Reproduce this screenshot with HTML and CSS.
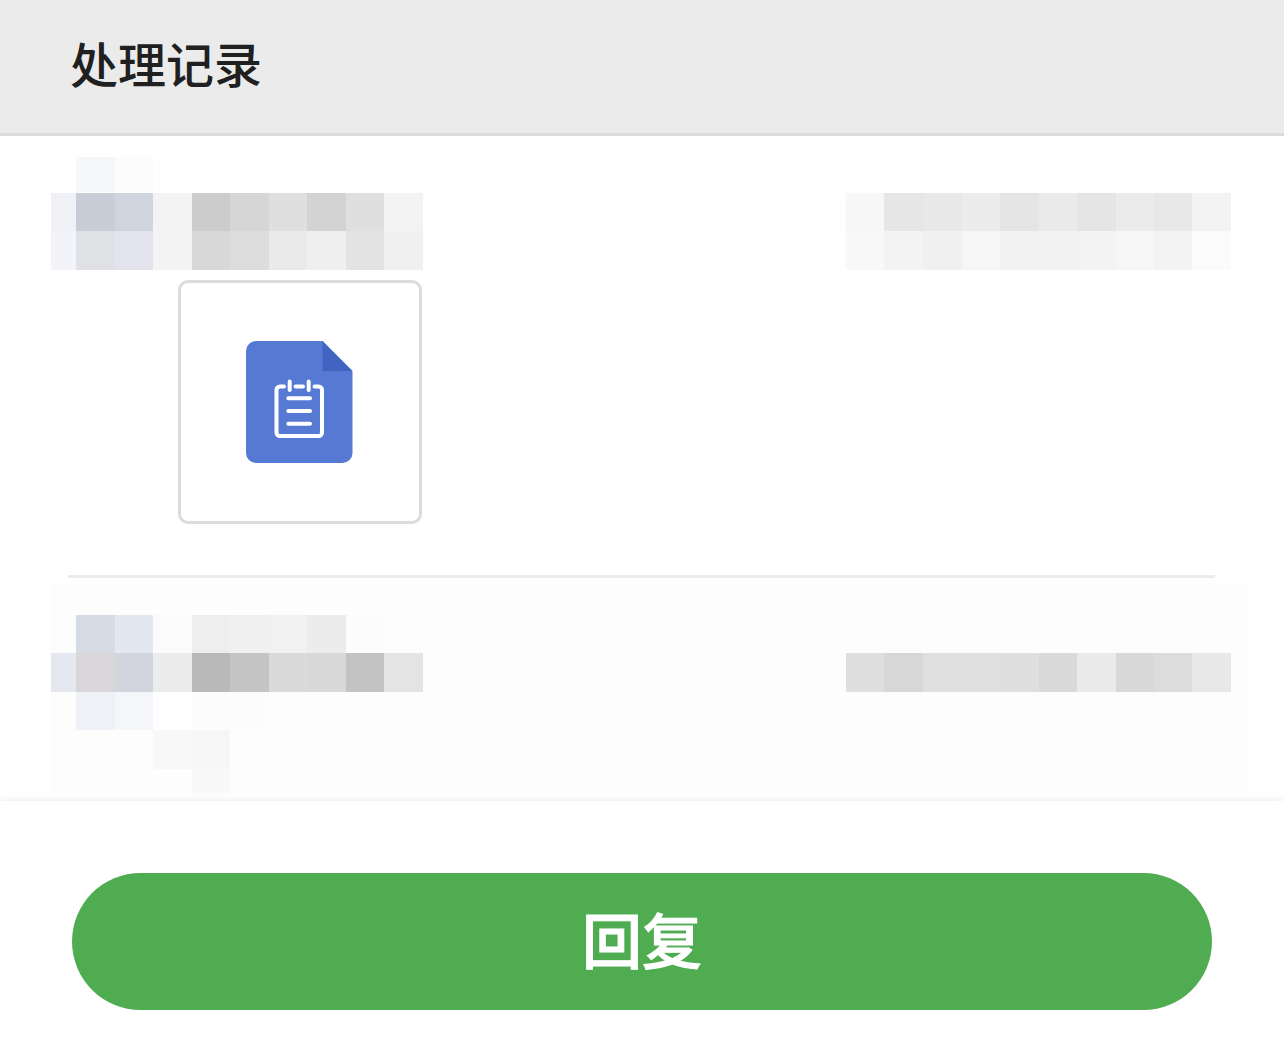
FILE: index.html
```html
<!DOCTYPE html>
<html lang="zh-CN">
<head>
    <meta charset="UTF-8">
    <meta name="viewport" content="width=device-width, initial-scale=1.0">
    <title>处理记录</title>
    <link rel="stylesheet" href="styles.css">
</head>
<body>

<header class="header">
    <h1 class="title">处理记录</h1>
</header>

<main class="records">
    <article class="record">
        <div class="record-head">
            <!-- masked avatar and name -->
            <svg class="mosaic" width="372" height="113" viewBox="0 0 372 113" aria-hidden="true">
                <path fill="#ffffff" d="M0 0h25v35H0z"/>
                <path fill="#f5f7f9" d="M25 0H64v35H25z"/>
                <path fill="#fbfbfb" d="M64 0h38v35H64z"/>
                <path fill="#eff1f6" d="M0 35.5h25V74H0z"/>
                <path fill="#c9cdd8" d="M25 35.5H64V74H25z"/>
                <path fill="#d0d4df" d="M64 35.5h38V74H64z"/>
                <path fill="#f3f3f3" d="M102 35.5h39V74h-39z"/>
                <path fill="#cccccc" d="M140.5 35.5H179V74h-38.5z"/>
                <path fill="#d6d6d6" d="M179 35.5h38.5V74H179z"/>
                <path fill="#dfdfdf" d="M217.5 35.5H256V74h-38.5z"/>
                <path fill="#d3d3d3" d="M256 35.5h38.5V74H256z"/>
                <path fill="#dfdfdf" d="M294.5 35.5H333V74h-38.5z"/>
                <path fill="#f3f3f3" d="M333 35.5h38.5V74H333z"/>
                <path fill="#f3f4f9" d="M0 74h25v39H0z"/>
                <path fill="#dfe1e5" d="M25 74H64v39H25z"/>
                <path fill="#e3e3ed" d="M64 74h38v39H64z"/>
                <path fill="#f4f4f4" d="M102 74h39v39h-39z"/>
                <path fill="#d8d8d8" d="M140.5 74H179v39h-38.5z"/>
                <path fill="#dddddd" d="M179 74h38.5v39H179z"/>
                <path fill="#eaeaea" d="M217.5 74H256v39h-38.5z"/>
                <path fill="#efefef" d="M256 74h38.5v39H256z"/>
                <path fill="#e3e3e3" d="M294.5 74H333v39h-38.5z"/>
                <path fill="#f0f0f0" d="M333 74h38.5v39H333z"/>
            </svg>
            <!-- masked time -->
            <svg class="mosaic" width="385" height="113" viewBox="0 0 385 113" aria-hidden="true">
                <path fill="#f7f7f7" d="M0 35.5h38V74H0z"/>
                <path fill="#e6e6e6" d="M38 35.5h39V74H38z"/>
                <path fill="#e8e8e8" d="M77 35.5h38.5V74H77z"/>
                <path fill="#ececec" d="M115.5 35.5H154V74h-38.5z"/>
                <path fill="#e5e5e5" d="M154 35.5h38.5V74H154z"/>
                <path fill="#eaeaea" d="M192.5 35.5H231V74h-38.5z"/>
                <path fill="#e5e5e5" d="M231 35.5h38.5V74H231z"/>
                <path fill="#ebebeb" d="M269.5 35.5H308V74h-38.5z"/>
                <path fill="#e8e8e8" d="M308 35.5h38V74h-38z"/>
                <path fill="#f3f3f3" d="M346 35.5h39V74h-39z"/>
                <path fill="#f8f8f8" d="M0 74h38v39H0z"/>
                <path fill="#f3f3f3" d="M38 74h39v39H38z"/>
                <path fill="#f0f0f0" d="M77 74h38.5v39H77z"/>
                <path fill="#f6f6f6" d="M115.5 74H154v39h-38.5z"/>
                <path fill="#f2f2f2" d="M154 74h77v39h-77z"/>
                <path fill="#f3f3f3" d="M231 74h38.5v39H231z"/>
                <path fill="#f6f6f6" d="M269.5 74H308v39h-38.5z"/>
                <path fill="#f3f3f3" d="M308 74h38v39h-38z"/>
                <path fill="#fbfbfb" d="M346 74h39v39h-39z"/>
            </svg>
        </div>
        <a class="attachment" href="#" aria-label="附件">
            <svg width="108" height="122" viewBox="0 0 108 122" aria-hidden="true">
                <path fill="#567ad3" d="M10 0h66.5l30 30.5V112a10 10 0 0 1-10 10H10A10 10 0 0 1 0 112V10A10 10 0 0 1 10 0z"/>
                <path fill="#4064c0" d="M76.5 0l30 30h-30z"/>
                <g fill="none" stroke="#ffffff" stroke-width="4" stroke-linecap="round" stroke-linejoin="round">
                    <path d="M38 45.5H34a3.5 3.5 0 0 0-3.5 3.5v42.5A3.5 3.5 0 0 0 34 95h38.5a3.5 3.5 0 0 0 3.5-3.5V49a3.5 3.5 0 0 0-3.5-3.5h-4"/>
                    <path d="M49.5 45.5H57M43.7 40.5V49M62.7 40.5V49"/>
                    <path d="M42.3 57.3H64M42.3 70H64M42.3 82.8H64"/>
                </g>
            </svg>
        </a>
    </article>

    <hr class="divider">

    <article class="record record-next">
        <div class="record-head">
            <svg class="mosaic" width="372" height="210" viewBox="0 0 372 210" aria-hidden="true">
                <path fill="#d5dce5" d="M25 30.5H64V69H25z"/>
                <path fill="#e3e7ef" d="M64 30.5h38V69H64z"/>
                <path fill="#fbfbfb" d="M102 30.5h39V69h-39z"/>
                <path fill="#eeeeee" d="M140.5 30.5H179V69h-38.5z"/>
                <path fill="#f0f0f0" d="M179 30.5h38.5V69H179z"/>
                <path fill="#f1f1f1" d="M217.5 30.5H256V69h-38.5z"/>
                <path fill="#ececec" d="M256 30.5h38.5V69H256z"/>
                <path fill="#fcfcfc" d="M294.5 30.5H333V69h-38.5z"/>
                <path fill="#e5e8f1" d="M0 69h25v39H0z"/>
                <path fill="#d9d6d9" d="M25 69H64v39H25z"/>
                <path fill="#d2d4de" d="M64 69h38v39H64z"/>
                <path fill="#ececec" d="M102 69h39v39h-39z"/>
                <path fill="#b9b9b9" d="M140.5 69H179v39h-38.5z"/>
                <path fill="#c4c4c4" d="M179 69h38.5v39H179z"/>
                <path fill="#dadada" d="M217.5 69H256v39h-38.5z"/>
                <path fill="#d8d8d8" d="M256 69h38.5v39H256z"/>
                <path fill="#c3c3c3" d="M294.5 69H333v39h-38.5z"/>
                <path fill="#e4e4e4" d="M333 69h38.5v39H333z"/>
                <path fill="#eef2f7" d="M25 108H64v38H25z"/>
                <path fill="#f4f6fa" d="M64 108h38v38H64z"/>
                <path fill="#ffffff" d="M102 108h39v38h-39z"/>
                <path fill="#fcfcfc" d="M140.5 108h77v38h-77z"/>
                <path fill="#f8f8f8" d="M102 146h39v39h-39z"/>
                <path fill="#f6f6f6" d="M140.5 146H179v39h-38.5z"/>
                <path fill="#f9f9f9" d="M140.5 185H179v24h-38.5z"/>
            </svg>
            <svg class="mosaic" width="385" height="210" viewBox="0 0 385 210" aria-hidden="true">
                <path fill="#dfdfdf" d="M0 69h38v39H0z"/>
                <path fill="#d7d7d7" d="M38 69h39v39H38z"/>
                <path fill="#e0e0e0" d="M77 69h77v39H77z"/>
                <path fill="#dfdfdf" d="M154 69h38.5v39H154z"/>
                <path fill="#d9d9d9" d="M192.5 69H231v39h-38.5z"/>
                <path fill="#eaeaea" d="M231 69h38.5v39H231z"/>
                <path fill="#d8d8d8" d="M269.5 69H308v39h-38.5z"/>
                <path fill="#dcdcdc" d="M308 69h38v39h-38z"/>
                <path fill="#e8e8e8" d="M346 69h39v39h-39z"/>
            </svg>
        </div>
    </article>
</main>

<footer class="footer">
    <button class="reply-button" type="button">回复</button>
</footer>

</body>
</html>
```
FILE: styles.css
```css
* {
    box-sizing: border-box;
}

body {
    margin: 0;
    min-height: 100vh;
    display: flex;
    flex-direction: column;
    font-family: "Noto Sans CJK SC", sans-serif;
    background-color: #ffffff;
    color: #202020;
}

.header {
    padding: 26px 70px 35px;
    background-color: #ebebeb;
    border-bottom: 3px solid #dbdbdb;
}

.title {
    margin: 0;
    font-size: 48px;
    line-height: 72px;
    font-weight: 500;
}

.records {
    flex: 1;
    padding-top: 21px;
}

.record {
    padding: 0 53px 51px 51px;
}

.record-head {
    display: flex;
    justify-content: space-between;
    background-color: #fefefe;
}

.mosaic {
    display: block;
    shape-rendering: crispEdges;
}

.attachment {
    display: flex;
    align-items: center;
    justify-content: center;
    width: 244px;
    height: 244px;
    margin: 10px 0 0 127px;
    border: 3px solid #dcdcdc;
    border-radius: 10px;
}

.divider {
    height: 3px;
    margin: 0 69px 6px 68px;
    border: none;
    background-color: #ebebeb;
}

.record-next {
    padding: 0 36px 0 51px;
}

.record-next .record-head {
    padding-right: 17px;
    background-color: #fdfdfd;
}

.footer {
    margin-top: 7px;
    padding: 72px 72px 53px;
    background-color: #ffffff;
    box-shadow: 0 0 8px rgba(0, 0, 0, 0.1);
}

.reply-button {
    display: block;
    width: 100%;
    height: 137px;
    padding: 0 0 8px;
    border: none;
    border-radius: 69px;
    background-color: #50ac50;
    color: #ffffff;
    font-family: inherit;
    font-size: 60px;
    line-height: 92px;
    font-weight: 500;
    -webkit-text-stroke: 1px #ffffff;
    cursor: pointer;
}
```
